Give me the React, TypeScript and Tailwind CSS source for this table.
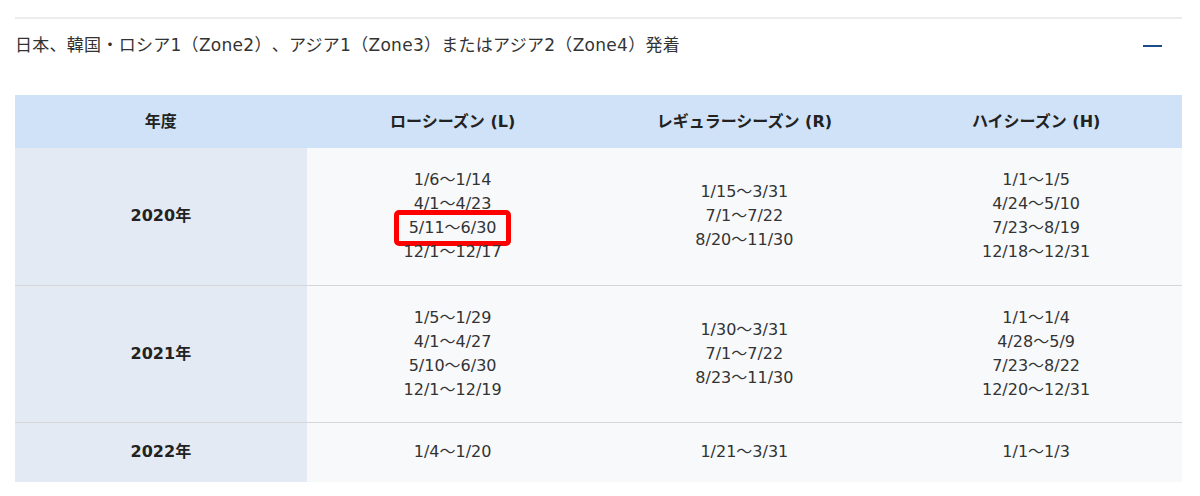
import React from 'react';

const rows = [
  {
    year: '2020年',
    low: ['1/6～1/14', '4/1～4/23', '5/11～6/30', '12/1～12/17'],
    regular: ['1/15～3/31', '7/1～7/22', '8/20～11/30'],
    high: ['1/1～1/5', '4/24～5/10', '7/23～8/19', '12/18～12/31'],
    mark: '5/11～6/30',
    h: 'h-[137px]',
  },
  {
    year: '2021年',
    low: ['1/5～1/29', '4/1～4/27', '5/10～6/30', '12/1～12/19'],
    regular: ['1/30～3/31', '7/1～7/22', '8/23～11/30'],
    high: ['1/1～1/4', '4/28～5/9', '7/23～8/22', '12/20～12/31'],
    h: 'h-[137px]',
  },
  {
    year: '2022年',
    low: ['1/4～1/20'],
    regular: ['1/21～3/31'],
    high: ['1/1～1/3'],
    h: 'h-[60px]',
  },
];

const font = { fontFamily: '"DejaVu Sans", "Noto Sans CJK JP", sans-serif' };

function Periods({ items, mark }: { items: string[]; mark?: string }) {
  return (
    <div className="flex flex-col items-center leading-[24px]">
      {items.map((p) => (
        <span key={p} className="relative">
          {p}
          {p === mark && (
            <span className="absolute -left-[15px] -right-[14px] -top-[6px] -bottom-[6px] border-[5px] border-[#ff0000] rounded-[5px]" />
          )}
        </span>
      ))}
    </div>
  );
}

export default function App() {
  return (
    <div
      className="w-[1200px] h-[496px] bg-white pl-[15px] pr-[18px] pt-[17px] text-[#333] [text-spacing-trim:space-all]"
      style={font}
    >
      <div className="border-t-2 border-[#ececec]">
        <div className="flex h-[53px] items-center justify-between pr-[20px]">
          <span className="text-[17px] tracking-[0.28px]">
            日本、韓国・ロシア1（Zone2）、アジア1（Zone3）またはアジア2（Zone4）発着
          </span>
          <span className="block w-[19px] h-[2px] bg-[#1d4a88]" />
        </div>
      </div>
      <table className="mt-[23px] w-full table-fixed border-collapse text-[16px]">
        <thead>
          <tr className="h-[53px] bg-[#cfe2f7] font-bold text-[#222]">
            <th className="w-1/4">年度</th>
            <th className="w-1/4">ローシーズン (L)</th>
            <th className="w-1/4">レギュラーシーズン (R)</th>
            <th className="w-1/4">ハイシーズン (H)</th>
          </tr>
        </thead>
        <tbody>
          {rows.map((r, i) => (
            <tr
              key={r.year}
              className={`${r.h} ${i < rows.length - 1 ? 'border-b border-[#d6d6d6]' : ''}`}
            >
              <td className="bg-[#e3eaf3] text-center font-bold text-[#222]">{r.year}</td>
              <td className="bg-[#f8f9fb] text-center">
                <Periods items={r.low} mark={r.mark} />
              </td>
              <td className="bg-[#f8f9fb] text-center">
                <Periods items={r.regular} />
              </td>
              <td className="bg-[#f8f9fb] text-center">
                <Periods items={r.high} />
              </td>
            </tr>
          ))}
        </tbody>
      </table>
    </div>
  );
}
